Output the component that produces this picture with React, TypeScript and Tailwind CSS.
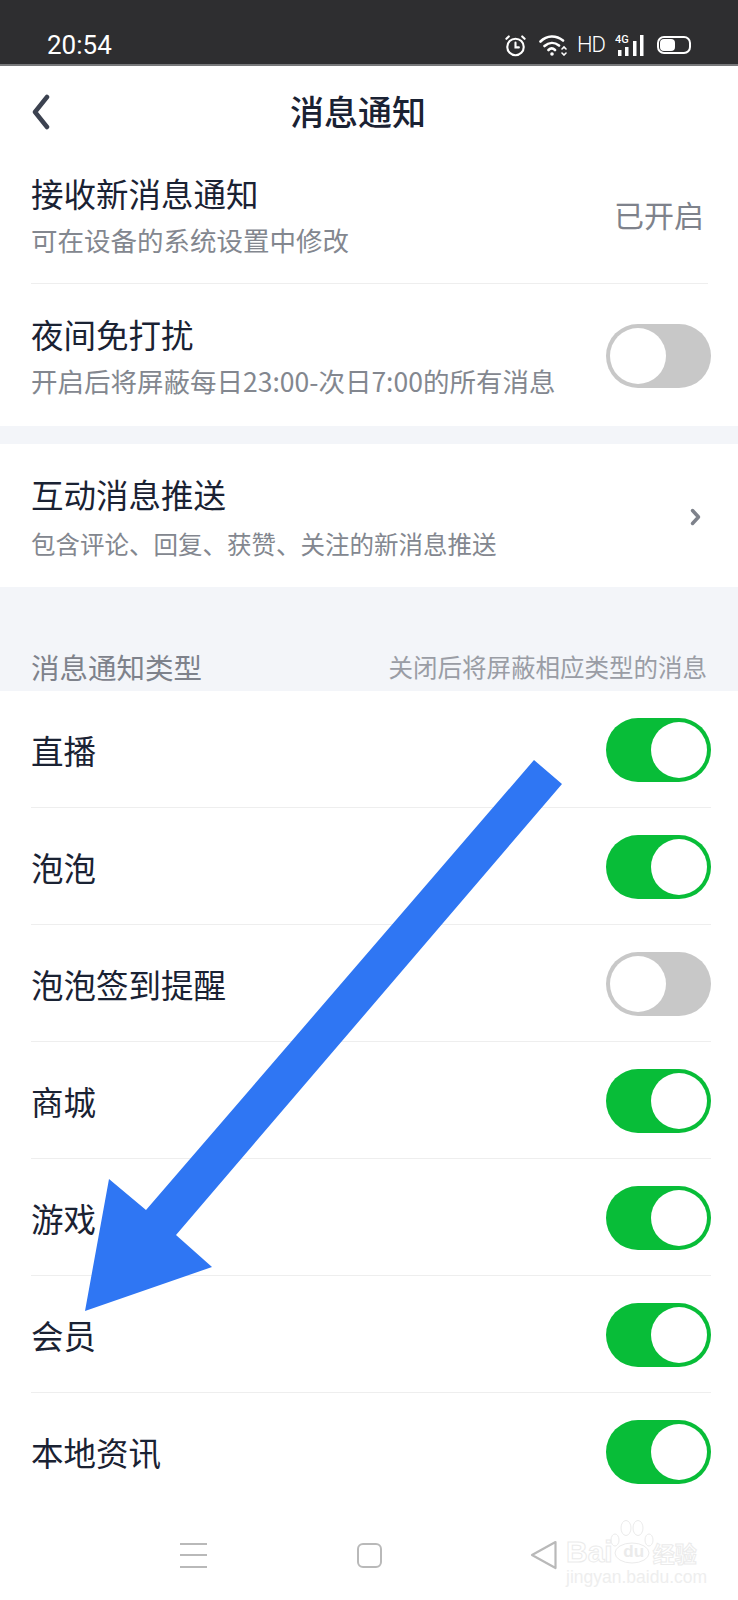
import React from 'react';

const cjk = 'font-["Noto_Sans_CJK_SC","Noto_Sans",sans-serif]';

function Toggle({ on }: { on: boolean }) {
  return (
    <div
      className={`flex h-[64px] w-[105px] shrink-0 items-center justify-end rounded-full p-[4px] ${
        on ? 'bg-[#08bd38]' : 'flex-row-reverse bg-[#c8c8c8]'
      }`}
    >
      <div className="h-[56px] w-[56px] rounded-full bg-white" />
    </div>
  );
}

function TwoLineRow({ title, sub, subClass, right, height }: { title: string; sub: string; subClass: string; right: React.ReactNode; height: string }) {
  return (
    <div className={`flex items-center justify-between ${height}`}>
      <div>
        <div className="text-[32.500px] leading-[44px] text-[#1a2233]">{title}</div>
        <div className={`leading-[36px] text-[#83878f] ${subClass}`}>{sub}</div>
      </div>
      {right}
    </div>
  );
}

function TypeRow({ label, on, last }: { label: string; on: boolean; last?: boolean }) {
  return (
    <div className={`flex h-[117px] items-center justify-between pt-[1px] ${last ? '' : 'border-b border-[#eeeeee]'}`}>
      <span className="text-[32.500px] leading-[44px] text-[#1a2233]">{label}</span>
      <Toggle on={on} />
    </div>
  );
}

export default function App() {
  return (
    <div className={`relative h-[1600px] w-[738px] overflow-hidden bg-white ${cjk}`}>
      {/* status bar */}
      <div className="flex h-[66px] items-end justify-between border-b-2 border-[#77787a] bg-[#2e2e30] pb-[5px] pl-[47px] pr-[47px] text-white">
        <span className="font-['Roboto',sans-serif] text-[26px] leading-[28px] font-normal">20:54</span>
        <div className="flex items-center">
          <svg width="23" height="23" viewBox="0 0 24 24" fill="none" stroke="white" strokeWidth="2.200" strokeLinecap="round">
            <circle cx="12" cy="13.500" r="8.600" />
            <path d="M12 9v5h3.500M2.500 5 5 2.500M21.500 5 19 2.500" />
          </svg>
          <svg className="ml-[12px]" width="28" height="22" viewBox="0 0 28 22" fill="none" stroke="white" strokeWidth="2.600" strokeLinecap="round">
            <path d="M1.500 7.500C8 1 17 1 24 6.500M5.500 12C10 8 15.500 8 20 11.500M9.500 16C11.500 14 14 14 16 16" />
            <circle cx="13" cy="20" r="1.800" fill="white" stroke="none" />
            <path d="m23 15 2-2 2 2M23 19l2 2 2-2" strokeWidth="1.600" />
          </svg>
          <span className="ml-[10px] w-[27px] font-['Roboto',sans-serif] text-[22px] leading-[28px] font-light tracking-[-1px]">HD</span>
          <svg className="ml-[11px]" width="31" height="24" viewBox="0 0 31 24" fill="white">
            <text x="0" y="9.500" fontSize="11" fontFamily="Roboto" fontWeight="500">4G</text>
            <rect x="3" y="17" width="3.500" height="6" />
            <rect x="10" y="14" width="3.500" height="9" />
            <rect x="18" y="8" width="3.500" height="15" />
            <rect x="25" y="2" width="3.500" height="21" />
          </svg>
          <div className="ml-[11px] flex h-[18px] w-[34px] items-center rounded-[7px] border-2 border-white p-[1px]">
            <div className="h-full w-[15px] rounded-[4px] bg-white" />
          </div>
        </div>
      </div>

      {/* header */}
      <div className="relative flex h-[90px] items-center justify-center pr-[22px]">
        <svg className="absolute left-[31px] top-[28px]" width="19" height="36" viewBox="0 0 19 36" fill="none" stroke="#3c4250" strokeWidth="4.500" strokeLinecap="round" strokeLinejoin="round">
          <path d="M16 3 4 18l12 15" />
        </svg>
        <h1 className="text-[34px] leading-[46px] font-medium text-[#1a2233]">消息通知</h1>
      </div>

      {/* notification settings */}
      <div className="pl-[31px] pr-[30px]">
        <TwoLineRow
          title="接收新消息通知"
          sub="可在设备的系统设置中修改"
          subClass="mt-[7px] text-[26.500px]"
          height="h-[128px] border-b border-[#eeeeee] pb-[10px]"
          right={<span className="mr-[4px] pb-[2px] text-[30px] leading-[40px] text-[#7e828b]">已开启</span>}
        />
        <div className="-mr-[3px]">
          <TwoLineRow
            title="夜间免打扰"
            sub="开启后将屏蔽每日23:00-次日7:00的所有消息"
            subClass="mt-[7px] text-[26.500px]"
            height="h-[142px]"
            right={
              <div className="pt-[2px]">
                <Toggle on={false} />
              </div>
            }
          />
        </div>
      </div>

      <div className="h-[18px] bg-[#f3f5f9]" />

      <div className="pl-[31px] pr-[37px]">
        <TwoLineRow
          title="互动消息推送"
          sub="包含评论、回复、获赞、关注的新消息推送"
          subClass="mt-[10px] text-[24.500px]"
          height="h-[143px] pt-[3px]"
          right={
            <svg width="11" height="18" viewBox="0 0 11 18" fill="none" stroke="#7e828b" strokeWidth="3.500" strokeLinecap="round" strokeLinejoin="round">
              <path d="m2.500 2.500 6 6.500-6 6.500" />
            </svg>
          }
        />
      </div>

      {/* type header */}
      <div className="flex h-[104px] items-end justify-between bg-[#f3f5f9] pb-[4px] pl-[31px] pr-[31px]">
        <span className="text-[28.500px] leading-[40px] text-[#7e828b]">消息通知类型</span>
        <span className="text-[24.500px] leading-[40px] text-[#9a9da5]">关闭后将屏蔽相应类型的消息</span>
      </div>

      <div className="pl-[31px] pr-[27px]">
        <TypeRow label="直播" on />
        <TypeRow label="泡泡" on />
        <TypeRow label="泡泡签到提醒" on={false} />
        <TypeRow label="商城" on />
        <TypeRow label="游戏" on />
        <TypeRow label="会员" on />
        <TypeRow label="本地资讯" on last />
      </div>

      {/* nav bar */}
      <div className="flex h-[90px] items-center">
        <div className="ml-[180px] flex h-[25px] w-[27px] flex-col justify-between">
          <div className="h-[2px] bg-[#b9b9b9]" />
          <div className="h-[2px] bg-[#b9b9b9]" />
          <div className="h-[2px] bg-[#b9b9b9]" />
        </div>
        <div className="ml-[150px] h-[25px] w-[25px] rounded-[6px] border-2 border-[#b9b9b9]" />
        <svg className="ml-[148px]" width="28" height="30" viewBox="0 0 28 30" fill="none" stroke="#b9b9b9" strokeWidth="2.200" strokeLinejoin="round">
          <path d="M25.500 2 2 15l23.500 13z" />
        </svg>
      </div>

      {/* annotation arrow */}
      <svg className="pointer-events-none absolute left-0 top-0" width="738" height="1600" viewBox="0 0 738 1600">
        <polygon points="85,1311 109,1179 146,1210 534,760 562,784 176,1235 212,1267" fill="#2f76f3" />
      </svg>

      {/* watermark */}
      <div className="pointer-events-none absolute left-[566px] top-[1520px] h-[66px] w-[134px]">
        <svg className="absolute left-[44px] top-0" width="44" height="44" viewBox="0 0 44 44" fill="white" stroke="#ebebeb" strokeWidth="1">
          <ellipse cx="5" cy="20" rx="4" ry="6" />
          <ellipse cx="16" cy="8" rx="5" ry="7.500" />
          <ellipse cx="28" cy="8" rx="5" ry="7.500" />
          <ellipse cx="39" cy="20" rx="4" ry="6" />
          <ellipse cx="22" cy="33" rx="17" ry="10" />
        </svg>
        <div className="absolute left-0 top-[17px] flex items-center text-white">
          <span className="font-['Liberation_Sans',sans-serif] text-[30px] leading-[30px] font-bold [-webkit-text-stroke:1px_#ebebeb]">Bai</span>
          <span className="ml-[6px] w-[30px] text-center font-['Liberation_Sans',sans-serif] text-[17px] leading-[24px] font-bold text-[#ebebeb]">du</span>
          <span className="ml-[4px] text-[22px] leading-[30px] font-bold [-webkit-text-stroke:1px_#ebebeb]">经验</span>
        </div>
        <span className="absolute left-0 top-[47px] font-['Liberation_Sans',sans-serif] text-[17.500px] leading-[20px] whitespace-nowrap text-[#eeeeee]">jingyan.baidu.com</span>
      </div>
    </div>
  );
}
